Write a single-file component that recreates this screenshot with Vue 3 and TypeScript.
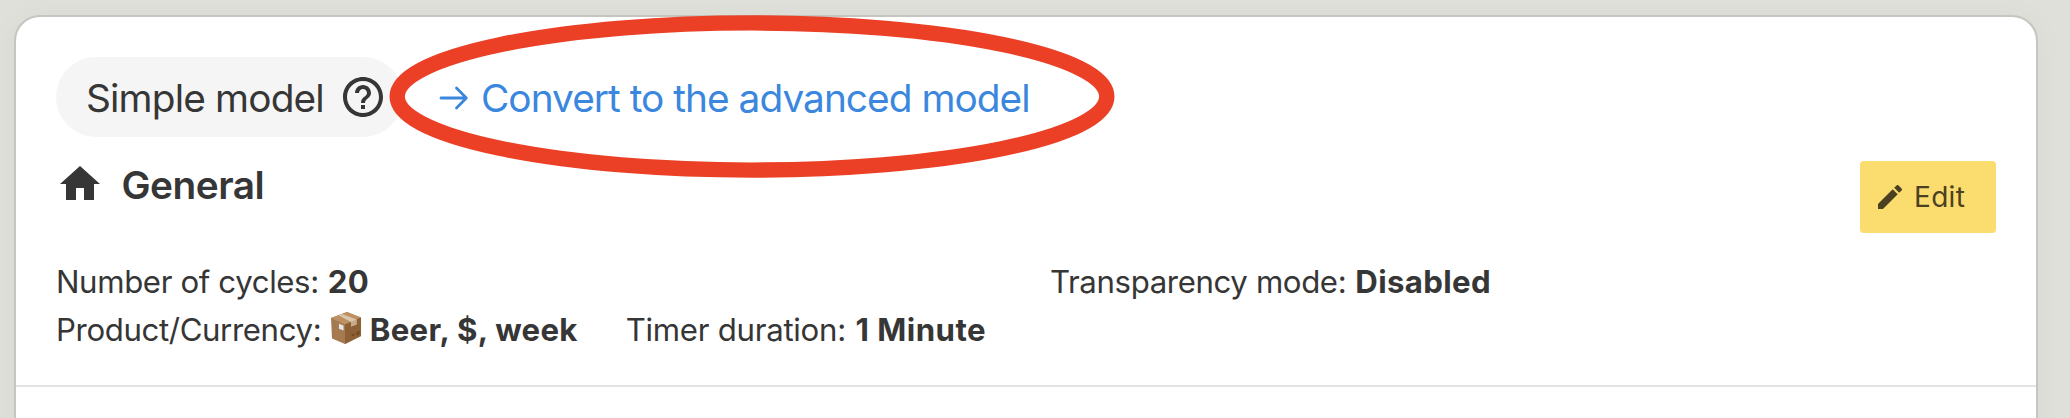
<script setup lang="ts">
const modelName: string = 'Simple model'
const convertLabel: string = 'Convert to the advanced model'
</script>

<template>
  <div class="page">
    <main class="card">
      <section class="panel">
        <div class="model-row">
          <div class="pill">
            <span class="pill-text">{{ modelName }}</span>
            <svg class="icon" viewBox="0 0 24 24" aria-hidden="true">
              <path d="M11 18h2v-2h-2v2zm1-16C6.48 2 2 6.48 2 12s4.480 10 10 10 10-4.480 10-10S17.520 2 12 2zm0 18c-4.410 0-8-3.590-8-8s3.590-8 8-8 8 3.590 8 8-3.590 8-8 8zm0-14c-2.210 0-4 1.790-4 4h2c0-1.100.9-2 2-2s2 .9 2 2c0 2-3 1.750-3 5h2c0-2.250 3-2.500 3-5 0-2.210-1.790-4-4-4z" />
            </svg>
          </div>
          <a class="convert">
            <svg class="arrow" viewBox="0 0 30 24" aria-hidden="true">
              <path d="M2 12H27M17.500 2L27.300 12L17.500 22" />
            </svg>
            <span class="convert-text">{{ convertLabel }}</span>
          </a>
          <svg class="highlight" viewBox="0 0 726 164" aria-hidden="true">
            <ellipse cx="363" cy="82.500" rx="354.800" ry="73.600" />
          </svg>
        </div>

        <div class="section-head">
          <h2 class="title">
            <svg class="icon" viewBox="0 0 24 24" aria-hidden="true">
              <path d="M10 20v-6h4v6h5v-8h3L12 3 2 12h3v8z" />
            </svg>
            <span>General</span>
          </h2>
          <button class="edit" type="button">
            <svg class="pencil" viewBox="0 0 24 24" aria-hidden="true">
              <path d="M3 17.250V21h3.750L17.810 9.940l-3.750-3.750L3 17.250zM20.710 7.040c.39-.39.39-1.020 0-1.410l-2.340-2.340c-.39-.39-1.020-.39-1.410 0l-1.830 1.830 3.750 3.750 1.830-1.830z" />
            </svg>
            <span>Edit</span>
          </button>
        </div>

        <div class="details">
          <div class="column">
            <div class="item cycles"><span class="label">Number of cycles:</span><strong class="num">20</strong></div>
            <div class="item">
              <span class="label">Product/Currency:</span>
              <svg class="box" viewBox="0 0 32 34" aria-hidden="true">
                <path d="M1 7L17 1L31 6.500V25L15 33L2 27.500Z" fill="#a67a50" />
                <path d="M1 7L17 1L31 6.500L15 13.500Z" fill="#bd9164" />
                <path d="M15 13.500L31 6.500V25L15 33Z" fill="#8e6035" />
                <path d="M8.500 4.200L12 2.900L26.500 8.500V13.500L21 15.500V10.900Z" fill="#dac6aa" />
                <path d="M21 10.900L26.500 8.500V13.500L21 15.500Z" fill="#c5ab8b" />
                <path d="M9 12.700L13.500 14.400V19.500L9 17.700Z" fill="#e3e7ea" />
                <path d="M21 24l2-1 2-.500-2 3zM26.500 21l3-1.300v3.500l-3 1.500z" fill="#6e4724" />
              </svg>
              <strong class="product">Beer, $, week</strong>
            </div>
            <div class="item"><span class="label timer">Timer duration:</span><strong class="minute">1 Minute</strong></div>
          </div>
          <div class="column">
            <div class="item"><span class="label">Transparency mode:</span><strong class="state">Disabled</strong></div>
          </div>
        </div>
      </section>
    </main>
  </div>
</template>

<style>
body {
  margin: 0;
  background: #dfe0d9;
}
</style>

<style scoped>
.page {
  box-sizing: border-box;
  height: 418px;
  padding: 15px 32px 0 14px;
  overflow: hidden;
  background: #dfe0d9;
  color: #363636;
  font-family: Inter, "Liberation Sans", sans-serif;
}

.card {
  box-sizing: border-box;
  height: 500px;
  border: 2px solid #c4c6bf;
  border-radius: 26px;
  background: #fff;
  box-shadow: 0 2px 32px rgba(10, 10, 10, 0.035);
}

.panel {
  box-sizing: border-box;
  height: 370px;
  padding: 40px 40px 0;
  border-bottom: 2px solid #e3e3e3;
}

.model-row {
  position: relative;
  display: flex;
  align-items: center;
  height: 80px;
  font-size: 38.800px;
  line-height: 80px;
}

.pill {
  box-sizing: border-box;
  display: flex;
  align-items: center;
  justify-content: space-between;
  width: 347px;
  height: 80px;
  padding: 0 16px 0 30px;
  border-radius: 40px;
  background: #f5f5f5;
}

.pill-text {
  padding-top: 2px;
  letter-spacing: -0.840px;
}

.icon {
  flex: none;
  width: 48px;
  height: 48px;
  fill: currentColor;
}

.convert {
  display: flex;
  align-items: center;
  margin-left: 36px;
  color: #3b87de;
}

.arrow {
  width: 30px;
  height: 24px;
  margin: 2px 12px 0 0;
  fill: none;
  stroke: currentColor;
  stroke-width: 2.800;
  stroke-linecap: round;
  stroke-linejoin: round;
}

.convert-text {
  padding-top: 2px;
  letter-spacing: -0.965px;
  white-space: nowrap;
}

.highlight {
  position: absolute;
  top: -43px;
  left: 333px;
  width: 726px;
  height: 164px;
  pointer-events: none;
}

.highlight ellipse {
  fill: none;
  stroke: #eb4026;
  stroke-width: 15.400;
}

.section-head {
  display: flex;
  align-items: flex-start;
  justify-content: space-between;
  padding-top: 24px;
}

.title {
  display: flex;
  align-items: center;
  gap: 17.500px;
  height: 48px;
  margin: -1px 0 0;
  font-size: 38.800px;
  font-weight: 600;
  line-height: 48px;
  letter-spacing: -0.500px;
}

.title span {
  padding-top: 1px;
}

.edit {
  box-sizing: border-box;
  display: flex;
  align-items: center;
  width: 136px;
  height: 72px;
  padding: 0 0 0 14px;
  border: 0;
  border-radius: 4px;
  background: #fbdc6e;
  color: #4b4121;
  font: 400 28px/40px Inter, "Liberation Sans", sans-serif;
  letter-spacing: 0.300px;
}

.pencil {
  width: 32px;
  height: 32px;
  margin-right: 8px;
  fill: currentColor;
}

.details {
  display: grid;
  grid-template-columns: 954px 1fr;
  column-gap: 40px;
  padding-top: 25px;
  font-size: 31.200px;
  line-height: 48px;
}

.column {
  display: flex;
  flex-wrap: wrap;
  align-content: flex-start;
  column-gap: 48px;
}

.item {
  display: flex;
  align-items: center;
  height: 48px;
  white-space: nowrap;
}

.cycles {
  flex-basis: 100%;
}

.label {
  margin-right: 9px;
  letter-spacing: -0.375px;
}

.timer {
  margin-right: 9.500px;
  letter-spacing: -0.277px;
}

.box {
  width: 32px;
  height: 34px;
  margin: -4px 8px 0 -0.500px;
}

.num {
  letter-spacing: 0.350px;
}

.product {
  letter-spacing: 0.300px;
}

.minute {
  letter-spacing: 0.480px;
}

.state {
  letter-spacing: 0.350px;
}
</style>
